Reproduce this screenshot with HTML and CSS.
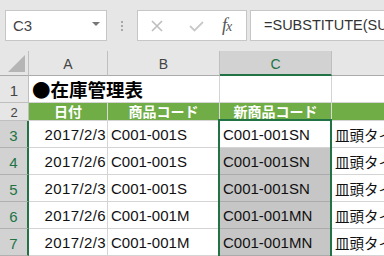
FILE: index.html
```html
<!DOCTYPE html>
<html lang="ja">
<head>
<meta charset="utf-8">
<link rel="stylesheet" href="styles.css">
</head>
<body>
<div class="app">
  <div class="toolbar">
    <div class="namebox"><span class="ref">C3</span><span class="caret"></span></div>
    <div class="dots"><i></i><i></i><i></i></div>
    <div class="fbtns">
      <svg class="ico-x" width="12" height="12" viewBox="0 0 12 12"><path d="M1 1L11 11M11 1L1 11" stroke="#bdbdbd" stroke-width="1.6" fill="none"/></svg>
      <svg class="ico-ok" width="15" height="12" viewBox="0 0 15 12"><path d="M1 6L5.5 10.5L14 2" stroke="#c9c9c9" stroke-width="1.8" fill="none"/></svg>
      <span class="fx">f<span class="fx-x">x</span></span>
    </div>
    <div class="formula">=SUBSTITUTE(SUBSTITUTE(B3,"-",""),"S","SN")</div>
  </div>
  <div class="sheet">
    <div class="hd corner"><span class="tri"></span></div>
    <div class="hd col">A</div>
    <div class="hd col">B</div>
    <div class="hd col sel">C</div>
    <div class="hd col last"></div>

    <div class="hd row">1</div>
    <div class="c title span2">●在庫管理表</div>
    <div class="c"></div>
    <div class="c"></div>

    <div class="hd row short">2</div>
    <div class="c g">日付</div>
    <div class="c g">商品コード</div>
    <div class="c g">新商品コード</div>
    <div class="c g"></div>

    <div class="hd row rsel">3</div>
    <div class="c r">2017/2/3</div>
    <div class="c">C001-001S</div>
    <div class="c">C001-001SN</div>
    <div class="c jp">皿頭タイプ</div>

    <div class="hd row rsel">4</div>
    <div class="c r">2017/2/6</div>
    <div class="c">C001-001S</div>
    <div class="c s">C001-001SN</div>
    <div class="c jp">皿頭タイプ</div>

    <div class="hd row rsel">5</div>
    <div class="c r">2017/2/3</div>
    <div class="c">C001-001S</div>
    <div class="c s">C001-001SN</div>
    <div class="c jp">皿頭タイプ</div>

    <div class="hd row rsel">6</div>
    <div class="c r">2017/2/6</div>
    <div class="c">C001-001M</div>
    <div class="c s">C001-001MN</div>
    <div class="c jp">皿頭タイプ</div>

    <div class="hd row rsel">7</div>
    <div class="c r">2017/2/3</div>
    <div class="c">C001-001M</div>
    <div class="c s">C001-001MN</div>
    <div class="c jp">皿頭タイプ</div>

    <div class="selbox"></div>
  </div>
</div>
</body>
</html>
```

FILE: styles.css
```css
* { box-sizing: border-box; margin: 0; padding: 0; }
html, body { width: 384px; height: 256px; overflow: hidden; background: #e6e6e6; }
body { font-family: "Liberation Sans", Arial, "Noto Sans CJK JP", sans-serif; color: #222; }

.app { width: 384px; height: 256px; overflow: hidden; }

.toolbar {
  height: 51px;
  display: flex;
  align-items: flex-start;
  padding: 10px 0 0 5px;
}
.namebox {
  width: 102px; height: 31px;
  background: #fff;
  border: 1px solid #c6c6c6;
  display: flex; align-items: center; justify-content: space-between;
  padding: 0 6px 0 7px;
}
.ref { font-size: 15px; color: #444; }
.caret {
  width: 0; height: 0;
  border-left: 4px solid transparent; border-right: 4px solid transparent;
  border-top: 4px solid #777;
  margin-top: -3px;
}
.dots {
  width: 30px; height: 31px;
  display: flex; flex-direction: column; align-items: center; justify-content: center; gap: 2px;
}
.dots i { display: block; width: 2px; height: 2px; background: #a8a8a8; }
.fbtns {
  width: 110px; height: 31px;
  background: #fff; border: 1px solid #c6c6c6;
  display: flex; align-items: center;
  padding-left: 13px;
}
.ico-x { margin-right: 26px; }
.ico-ok { margin-right: 18px; }
.fx { font-family: "Liberation Serif", serif; font-style: italic; font-size: 18px; color: #555; letter-spacing: -1px; }
.fx-x { font-size: 14px; }
.formula {
  flex: 1; height: 31px; margin-left: 3px; margin-right: -4px;
  background: #fff; border: 1px solid #c6c6c6;
  font-size: 14.5px; color: #333;
  white-space: nowrap; overflow: hidden;
  padding: 6px 0 0 13px;
}

.sheet {
  position: relative;
  display: grid;
  grid-template-columns: 29px 79px 112px 112px 60px;
  grid-template-rows: 25px 27px 18px 27px 27px 27px 27px 27px;
  background: #fff;
}
.hd {
  background: #e6e6e6;
  color: #444;
  font-size: 14px;
  display: flex; align-items: center; justify-content: center;
  border-right: 1px solid #bfbfbf;
  border-bottom: 1px solid #bfbfbf;
}
.hd.col { border-bottom: 1px solid #ababab; padding-top: 2px; }
.hd.col.last { border-right: none; }
.hd.col.sel { background: #d2d2d2; color: #217346; border-bottom: 2px solid #217346; padding-top: 3px; }
.corner { position: relative; border-bottom: 1px solid #ababab; }
.tri {
  position: absolute; right: 3px; bottom: 3px;
  width: 0; height: 0;
  border-left: 17px solid transparent;
  border-bottom: 17px solid #b5b5b5;
}
.hd.row { padding-top: 2px; font-size: 15px; }
.hd.row.short { font-size: 13px; align-items: flex-end; padding: 0; line-height: 14px; }
.hd.row.rsel { background: #d2d2d2; color: #217346; border-right: 2px solid #217346; border-bottom-color: #b0b0b0; }

.c {
  background: #fff;
  border-right: 1px solid #d4d4d4;
  border-bottom: 1px solid #d4d4d4;
  font-size: 15px;
  display: flex; align-items: center;
  padding: 0 3px;
  white-space: nowrap; overflow: hidden;
  color: #111;
}
.c.r { justify-content: flex-end; padding-right: 1px; letter-spacing: 0.4px; }
.c.span2 { grid-column: span 2; }
.c.title {
  font-family: "Noto Sans CJK JP", sans-serif;
  font-weight: bold; font-size: 18.5px; color: #000;
  padding-left: 3px;
  overflow: visible;
}
.c.g {
  background: #70ad47; color: #fff;
  font-family: "Noto Sans CJK JP", sans-serif;
  font-weight: bold; font-size: 14px;
  justify-content: center;
  border-right-color: #d9d9d9;
  border-bottom-color: #d4d4d4;
  line-height: 17px;
  overflow: visible;
}
.c.s { background: #c6c6c6; border-bottom-color: #ababab; }
.c.jp { font-family: "Noto Sans CJK JP", sans-serif; font-size: 14.5px; border-right: none; }

.selbox {
  position: absolute;
  left: 218px; top: 68px;
  width: 114px; height: 200px;
  border: 2px solid #217346;
  pointer-events: none;
}
```
